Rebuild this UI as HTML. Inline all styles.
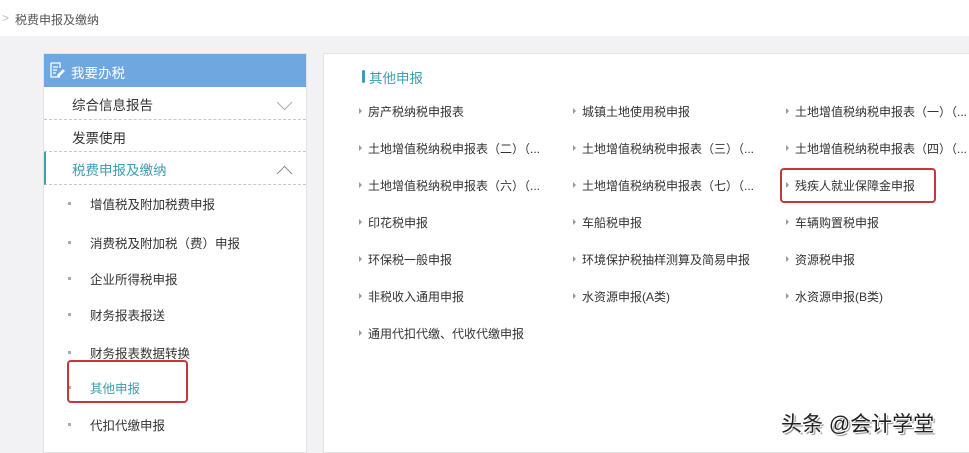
<!DOCTYPE html>
<html><head><meta charset="utf-8"><style>
*{margin:0;padding:0;box-sizing:border-box}
body{width:969px;height:449px;overflow:hidden;background:#f2f2f4;font-family:"Liberation Sans","Noto Sans CJK SC",sans-serif;color:#333;position:relative}
.top{position:absolute;left:0;top:0;width:969px;height:36px;background:#fff;font-size:12px;color:#555}
.top span{position:absolute;left:15px;top:11px}
.top i{position:absolute;left:2px;top:11px;color:#bbb;font-style:normal}
.left{position:absolute;left:43px;top:53px;width:264px;height:400px;background:#fff;border:1px solid #e3e3e3}
.hd{height:33px;background:#6fa8e0;color:#fff;font-size:13.5px;padding:8px 0 0 27px;position:relative}
.hd svg{position:absolute;left:5px;top:8px}
.row{height:32.5px;border-bottom:1px dashed #c8c8c8;font-size:13.5px;padding:7px 0 0 28px;position:relative}
.row.act{color:#3a9fb0;border-left:2px solid #3a9fb0;padding-left:26px}
.chev{position:absolute;right:16px;top:10px;width:11px;height:11px;border-right:1px solid #aaa;border-bottom:1px solid #aaa;transform:rotate(45deg)}
.chev.up{transform:rotate(225deg);top:16px;border-color:#888}
.sub{position:absolute;left:90px;font-size:12.5px;color:#333}
.sub:before{content:"";position:absolute;left:-22px;top:8px;width:3px;height:3px;background:#aaa}
.right{position:absolute;left:323px;top:53px;width:650px;height:400px;background:#fff;border:1px solid #e3e3e3}
.title{position:absolute;left:45px;top:13px;font-size:13.5px;color:#3a9fb0}
.title:before{content:"";position:absolute;left:-7px;top:3px;width:3px;height:13px;background:#3a9fb0;border-radius:2px}
.it{position:absolute;font-size:12px;color:#333;white-space:nowrap}
.it:before{content:"";position:absolute;left:-9px;top:5px;border-left:3px solid #999;border-top:3px solid transparent;border-bottom:3px solid transparent}
.red{position:absolute;border:2.5px solid #c5383a;border-radius:4px}
.wm{position:absolute;left:781px;top:408px;font-size:21px;color:#222;text-shadow:1px 1px 0 #fff,-1px -1px 0 #fff,2px 2px 1px #888}
</style></head><body>
<div class="top"><i>&gt;</i><span>税费申报及缴纳</span></div>
<div class="left">
<div class="hd"><svg width="16" height="16" viewBox="0 0 16 16" fill="none" stroke="#fff" stroke-width="1.3"><path d="M2 1h9v5M2 1v14h9M4 5h5M4 8h4M4 11h3M9 13l5-5 1 1-5 5H9z"/></svg>我要办税</div>
<div class="row">综合信息报告<span class="chev"></span></div>
<div class="row">发票使用</div>
<div class="row act">税费申报及缴纳<span class="chev up"></span></div>
</div>
<div class="sub" style="top:194px">增值税及附加税费申报</div>
<div class="sub" style="top:233px">消费税及附加税（费）申报</div>
<div class="sub" style="top:269px">企业所得税申报</div>
<div class="sub" style="top:305px">财务报表报送</div>
<div class="sub" style="top:343px">财务报表数据转换</div>
<div class="sub" style="top:378px;color:#3a9fb0">其他申报</div>
<div class="sub" style="top:415px">代扣代缴申报</div>
<div class="red" style="left:67px;top:360px;width:121px;height:43px"></div>
<div class="right"><div class="title">其他申报</div></div>
<div class="it" style="left:368px;top:103px">房产税纳税申报表</div>
<div class="it" style="left:582px;top:103px">城镇土地使用税申报</div>
<div class="it" style="left:795px;top:103px">土地增值税纳税申报表（一）（...</div>
<div class="it" style="left:368px;top:140px">土地增值税纳税申报表（二）（...</div>
<div class="it" style="left:582px;top:140px">土地增值税纳税申报表（三）（...</div>
<div class="it" style="left:795px;top:140px">土地增值税纳税申报表（四）（...</div>
<div class="it" style="left:368px;top:177px">土地增值税纳税申报表（六）（...</div>
<div class="it" style="left:582px;top:177px">土地增值税纳税申报表（七）（...</div>
<div class="it" style="left:795px;top:177px">残疾人就业保障金申报</div>
<div class="it" style="left:368px;top:214px">印花税申报</div>
<div class="it" style="left:582px;top:214px">车船税申报</div>
<div class="it" style="left:795px;top:214px">车辆购置税申报</div>
<div class="it" style="left:368px;top:251px">环保税一般申报</div>
<div class="it" style="left:582px;top:251px">环境保护税抽样测算及简易申报</div>
<div class="it" style="left:795px;top:251px">资源税申报</div>
<div class="it" style="left:368px;top:288px">非税收入通用申报</div>
<div class="it" style="left:582px;top:288px">水资源申报(A类)</div>
<div class="it" style="left:795px;top:288px">水资源申报(B类)</div>
<div class="it" style="left:368px;top:325px">通用代扣代缴、代收代缴申报</div>
<div class="red" style="left:780px;top:168px;width:156px;height:35px"></div>
<div class="wm">头条 @会计学堂</div>
</body></html>
